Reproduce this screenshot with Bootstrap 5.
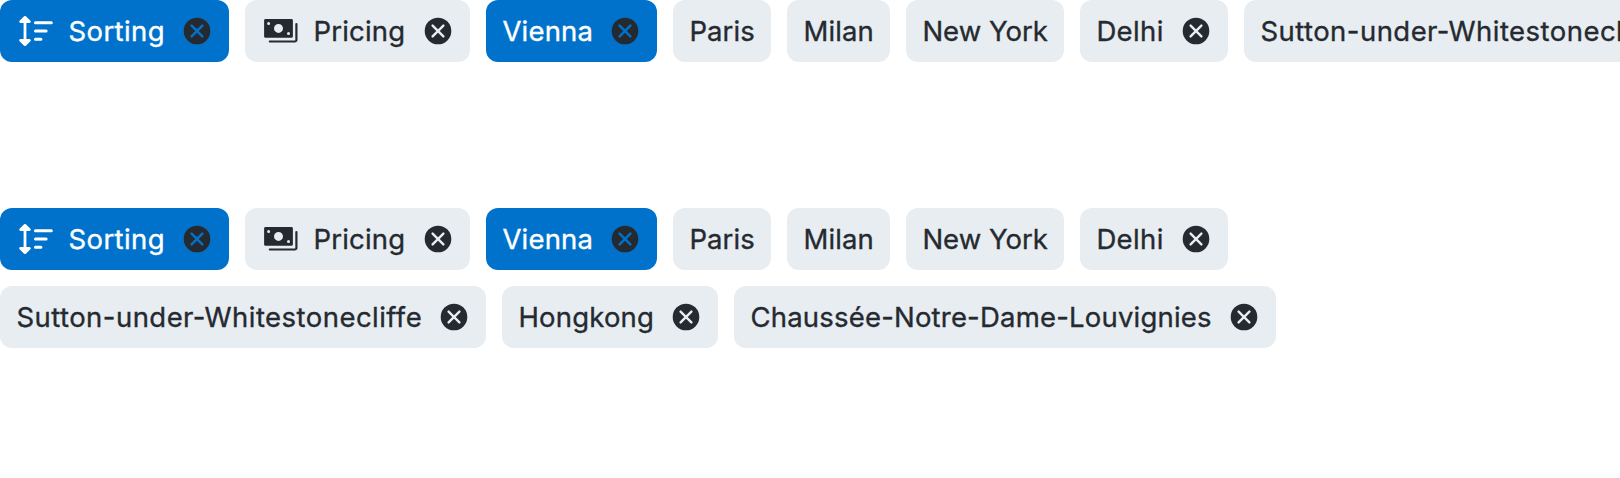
<!DOCTYPE html>
<html lang="en">
<head>
<meta charset="utf-8">
<meta name="viewport" content="width=device-width, initial-scale=1">
<title>Chips</title>
<link href="https://cdn.jsdelivr.net/npm/bootstrap@5.3.0/dist/css/bootstrap.min.css" rel="stylesheet">
<style>
  body { background: #fff; font-family: Inter, "Liberation Sans", sans-serif; }
  .chip-set + .chip-set { margin-top: 146px; }
  .chip { height: 62px; padding: 0 16px; border-radius: 12px; border: 0; gap: 16px; --cross: #e8edf1;
    background: #e8edf1; color: #252a31; font-size: 27.5px; font-weight: 400; line-height: 36px; white-space: nowrap; }
  .chip-active { background: #0172cb; color: #fff; --cross: #0172cb; }
  .chip-text { letter-spacing: var(--ls, 0); width: var(--w); text-indent: .4px; -webkit-text-stroke: .35px currentColor; }
  .chip svg { display: block; flex: none; overflow: visible; }
  symbol { overflow: visible; }
  .t-sorting { --w: 97px; --ls: .43px; }
  .t-pricing { --w: 93px; --ls: .2px; }
  .t-vienna { --w: 91px; --ls: .2px; }
  .t-paris { --w: 66px; --ls: .1px; }
  .t-milan { --w: 71px; --ls: .15px; }
  .t-newyork { --w: 126px; --ls: 0px; }
  .t-delhi { --w: 68px; --ls: .38px; }
  .t-sutton { --w: 406px; --ls: .455px; }
  .t-hongkong { --w: 136px; --ls: .2px; }
  .t-chaussee { --w: 462px; --ls: .2px; }
</style>
</head>
<body>
<svg class="d-none" xmlns="http://www.w3.org/2000/svg">
  <symbol id="sort" viewBox="0 0 36 36">
    <path d="M9 5v26" stroke="currentColor" stroke-width="2.800"/>
    <path d="M9 4.300 13.500 8.600H4.500zM9 31.700l4.500-4.300H4.500z" fill="currentColor" stroke="currentColor" stroke-width="2.600" stroke-linejoin="round"/>
    <path d="M19.500 9.700h15.800M19.500 18h10.600M19.500 26.300h5.400" stroke="currentColor" stroke-width="3.100" stroke-linecap="round"/>
  </symbol>
  <symbol id="cash" viewBox="0 0 36 36">
    <path fill="currentColor" fill-rule="evenodd" d="M4.500 6h26a1.400 1.400 0 0 1 1.400 1.400v16a1.400 1.400 0 0 1-1.400 1.400h-26a1.400 1.400 0 0 1-1.400-1.400v-16A1.400 1.400 0 0 1 4.500 6zM17.500 10.900a4.500 4.500 0 1 0 0 9 4.500 4.500 0 0 0 0-9zM7.600 9.100a1.500 1.500 0 1 0 0 3 1.500 1.500 0 0 0 0-3zM27.500 19a1.500 1.500 0 1 0 0 3 1.500 1.500 0 0 0 0-3z"/>
    <path d="M8.800 28.500h25a1.600 1.600 0 0 0 1.600-1.600V11" fill="none" stroke="currentColor" stroke-width="2.200" stroke-linecap="round"/>
  </symbol>
  <symbol id="close" viewBox="0 0 32 32">
    <circle cx="16" cy="16" r="13.300" fill="#252a31"/>
    <path d="M10.600 10.600l10.800 10.800M21.400 10.600L10.600 21.400" stroke="var(--cross)" stroke-width="2.400" stroke-linecap="round"/>
  </symbol>
</svg>
<main class="overflow-hidden vh-100">
  <div class="chip-set d-flex flex-nowrap gap-3">
    <div class="chip chip-active d-flex flex-shrink-0 align-items-center"><svg width="36" height="36"><use href="#sort"/></svg><span class="chip-text t-sorting">Sorting</span><svg width="32" height="32"><use href="#close"/></svg></div>
    <div class="chip d-flex flex-shrink-0 align-items-center"><svg width="36" height="36"><use href="#cash"/></svg><span class="chip-text t-pricing">Pricing</span><svg width="32" height="32"><use href="#close"/></svg></div>
    <div class="chip chip-active d-flex flex-shrink-0 align-items-center"><span class="chip-text t-vienna">Vienna</span><svg width="32" height="32"><use href="#close"/></svg></div>
    <div class="chip d-flex flex-shrink-0 align-items-center"><span class="chip-text t-paris">Paris</span></div>
    <div class="chip d-flex flex-shrink-0 align-items-center"><span class="chip-text t-milan">Milan</span></div>
    <div class="chip d-flex flex-shrink-0 align-items-center"><span class="chip-text t-newyork">New York</span></div>
    <div class="chip d-flex flex-shrink-0 align-items-center"><span class="chip-text t-delhi">Delhi</span><svg width="32" height="32"><use href="#close"/></svg></div>
    <div class="chip d-flex flex-shrink-0 align-items-center"><span class="chip-text t-sutton">Sutton-under-Whitestonecliffe</span><svg width="32" height="32"><use href="#close"/></svg></div>
  </div>
  <div class="chip-set d-flex flex-wrap gap-3">
    <div class="chip chip-active d-flex flex-shrink-0 align-items-center"><svg width="36" height="36"><use href="#sort"/></svg><span class="chip-text t-sorting">Sorting</span><svg width="32" height="32"><use href="#close"/></svg></div>
    <div class="chip d-flex flex-shrink-0 align-items-center"><svg width="36" height="36"><use href="#cash"/></svg><span class="chip-text t-pricing">Pricing</span><svg width="32" height="32"><use href="#close"/></svg></div>
    <div class="chip chip-active d-flex flex-shrink-0 align-items-center"><span class="chip-text t-vienna">Vienna</span><svg width="32" height="32"><use href="#close"/></svg></div>
    <div class="chip d-flex flex-shrink-0 align-items-center"><span class="chip-text t-paris">Paris</span></div>
    <div class="chip d-flex flex-shrink-0 align-items-center"><span class="chip-text t-milan">Milan</span></div>
    <div class="chip d-flex flex-shrink-0 align-items-center"><span class="chip-text t-newyork">New York</span></div>
    <div class="chip d-flex flex-shrink-0 align-items-center"><span class="chip-text t-delhi">Delhi</span><svg width="32" height="32"><use href="#close"/></svg></div>
    <div class="chip d-flex flex-shrink-0 align-items-center"><span class="chip-text t-sutton">Sutton-under-Whitestonecliffe</span><svg width="32" height="32"><use href="#close"/></svg></div>
    <div class="chip d-flex flex-shrink-0 align-items-center"><span class="chip-text t-hongkong">Hongkong</span><svg width="32" height="32"><use href="#close"/></svg></div>
    <div class="chip d-flex flex-shrink-0 align-items-center"><span class="chip-text t-chaussee">Chaussée-Notre-Dame-Louvignies</span><svg width="32" height="32"><use href="#close"/></svg></div>
  </div>
</main>
<script src="https://cdn.jsdelivr.net/npm/bootstrap@5.3.0/dist/js/bootstrap.bundle.min.js"></script>
</body>
</html>
